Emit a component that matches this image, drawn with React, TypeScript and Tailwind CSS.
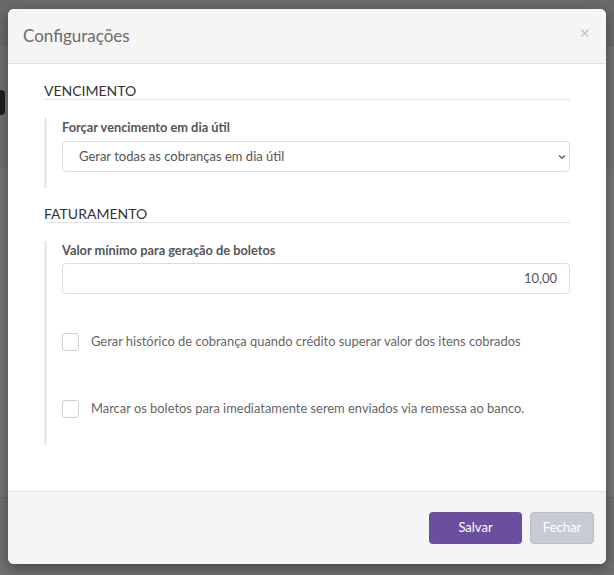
import { ChevronDown } from "lucide-react";

function SectionTitle({ title }: { title: string }) {
  return (
    <div className="border-b border-[#e3e3e3] text-[14px] leading-[17px] text-[#333]">
      {title}
    </div>
  );
}

function CheckRow({ label }: { label: string }) {
  return (
    <label className="flex items-center gap-[12px] text-[12.9px] text-[#666]">
      <span className="h-[18px] w-[17px] rounded-[3px] border border-[#cfcfcf] bg-white" />
      {label}
    </label>
  );
}

export default function App() {
  return (
    <div className="relative h-[575px] w-[614px] overflow-hidden bg-[#767676] font-['Lato',sans-serif]">
      {/* page behind the backdrop */}
      <div className="absolute inset-x-0 top-0 h-[47px] bg-[#6a6a6a]" />
      <div className="absolute inset-x-0 top-[47px] h-[122px] bg-[#727272]" />
      <div className="absolute left-0 top-[90px] h-[25px] w-[5px] rounded-r bg-[#1c1c1c]" />
      <div className="absolute inset-x-0 top-[497px] h-[78px] border-t border-[#6a6a6a] bg-[#707070]" />

      <div className="relative ml-[8px] mt-[9px] flex h-[555px] w-[598px] flex-col overflow-hidden rounded-[6px] bg-white shadow-[0_4px_14px_rgba(0,0,0,0.4)]">
        <div className="flex h-[55px] items-center justify-between border-b border-[#e2e2e2] bg-[#f5f5f5] pl-[15px] pr-[16px]">
          <h2 className="text-[17px] text-[#6b6b6b]">Configurações</h2>
          <span className="-mt-[8px] text-[18px] leading-none text-[#c2c2c2]">×</span>
        </div>

        <div className="flex-1 pl-[36px] pr-[36px] pt-[18px]">
          <SectionTitle title="VENCIMENTO" />
          <div className="mt-[18px] border-l-[3px] border-[#ebebeb] pb-[16px] pl-[15px]">
            <div className="text-[12.8px] font-bold leading-[18px] text-[#555]">
              Forçar vencimento em dia útil
            </div>
            <div className="mt-[5px] flex h-[31px] items-center justify-between rounded-[4px] border border-[#dcdcdc] pl-[16px] pr-[2px] text-[13px] text-[#555]">
              <span>Gerar todas as cobranças em dia útil</span>
              <ChevronDown className="h-[10px] w-[10px] text-[#666]" strokeWidth={3.5} />
            </div>
          </div>

          <div className="mt-[17px]">
            <SectionTitle title="FATURAMENTO" />
          </div>
          <div className="mt-[18px] border-l-[3px] border-[#ebebeb] pb-[26px] pl-[15px]">
            <div className="text-[12.8px] font-bold leading-[18px] text-[#555]">
              Valor mínimo para geração de boletos
            </div>
            <div className="mt-[4px] flex h-[31px] items-center justify-end rounded-[4px] border border-[#dcdcdc] pr-[12px] text-[13px] text-[#555]">
              10,00
            </div>
            <div className="mt-[38px]">
              <CheckRow label="Gerar histórico de cobrança quando crédito superar valor dos itens cobrados" />
            </div>
            <div className="mt-[48px]">
              <CheckRow label="Marcar os boletos para imediatamente serem enviados via remessa ao banco." />
            </div>
          </div>
        </div>

        <div className="flex h-[73px] items-start justify-end gap-[8px] border-t border-[#e2e2e2] bg-[#f5f5f5] pr-[12px] pt-[20px]">
          <button className="h-[32px] w-[93px] rounded-[4px] bg-[#6a4f9e] text-[13px] text-white">
            Salvar
          </button>
          <button className="h-[32px] w-[64px] rounded-[4px] border border-[#b9bdca] bg-[#c7cbd6] text-[13px] text-white">
            Fechar
          </button>
        </div>
      </div>
    </div>
  );
}
